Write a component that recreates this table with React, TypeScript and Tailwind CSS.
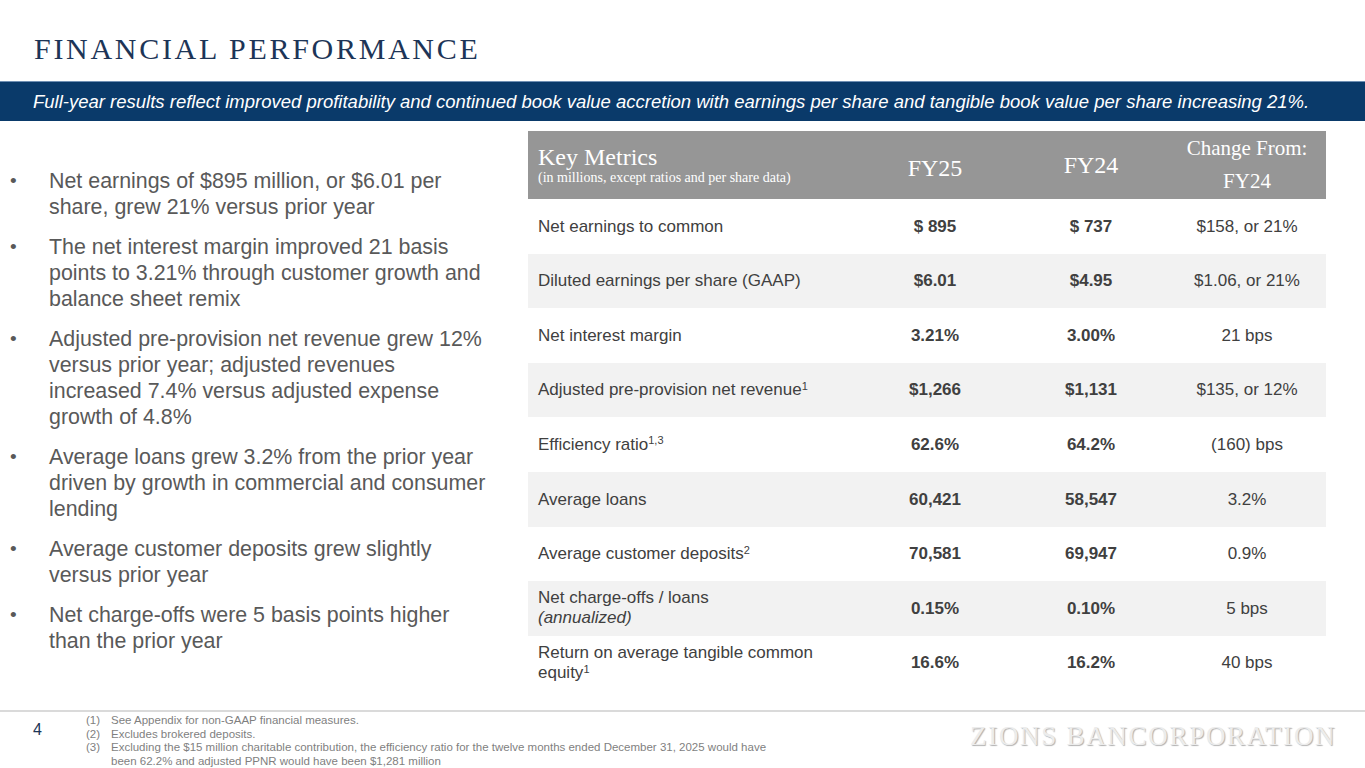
const bullets = [
  "Net earnings of $895 million, or $6.01 per share, grew 21% versus prior year",
  "The net interest margin improved 21 basis points to 3.21% through customer growth and balance sheet remix",
  "Adjusted pre-provision net revenue grew 12% versus prior year; adjusted revenues increased 7.4% versus adjusted expense growth of 4.8%",
  "Average loans grew 3.2% from the prior year driven by growth in commercial and consumer lending",
  "Average customer deposits grew slightly versus prior year",
  "Net charge-offs were 5 basis points higher than the prior year",
];

type Row = {
  label: React.ReactNode;
  fy25: string;
  fy24: string;
  change: string;
};

const rows: Row[] = [
  { label: "Net earnings to common", fy25: "$ 895", fy24: "$ 737", change: "$158, or 21%" },
  { label: "Diluted earnings per share (GAAP)", fy25: "$6.01", fy24: "$4.95", change: "$1.06, or 21%" },
  { label: "Net interest margin", fy25: "3.21%", fy24: "3.00%", change: "21 bps" },
  {
    label: (
      <>
        Adjusted pre-provision net revenue<sup className="text-[11px]">1</sup>
      </>
    ),
    fy25: "$1,266",
    fy24: "$1,131",
    change: "$135, or 12%",
  },
  {
    label: (
      <>
        Efficiency ratio<sup className="text-[11px]">1,3</sup>
      </>
    ),
    fy25: "62.6%",
    fy24: "64.2%",
    change: "(160) bps",
  },
  { label: "Average loans", fy25: "60,421", fy24: "58,547", change: "3.2%" },
  {
    label: (
      <>
        Average customer deposits<sup className="text-[11px]">2</sup>
      </>
    ),
    fy25: "70,581",
    fy24: "69,947",
    change: "0.9%",
  },
  {
    label: (
      <span className="block leading-[20px]">
        Net charge-offs / loans
        <br />
        <i>(annualized)</i>
      </span>
    ),
    fy25: "0.15%",
    fy24: "0.10%",
    change: "5 bps",
  },
  {
    label: (
      <span className="block leading-[20px]">
        Return on average tangible common
        <br />
        equity<sup className="text-[11px]">1</sup>
      </span>
    ),
    fy25: "16.6%",
    fy24: "16.2%",
    change: "40 bps",
  },
];

const notes = [
  ["(1)", "See Appendix for non-GAAP financial measures."],
  ["(2)", "Excludes brokered deposits."],
  [
    "(3)",
    "Excluding the $15 million charitable contribution, the efficiency ratio for the twelve months ended December 31, 2025 would have been 62.2% and adjusted PPNR would have been $1,281 million",
  ],
];

export default function App() {
  return (
    <div className="flex h-[768px] w-[1365px] flex-col overflow-hidden bg-white font-['Liberation_Sans',Arial,sans-serif]">
      {/* Title */}
      <div className="flex h-[81px] items-end pb-[17px] pl-[34px]">
        <h1 className="font-['Liberation_Serif',serif] text-[30px] leading-none tracking-[2.7px] text-[#1d3557]">
          FINANCIAL PERFORMANCE
        </h1>
      </div>

      {/* Banner */}
      <div className="flex h-[40px] items-center border-t border-[#6f8fb3] bg-[#0a3a6a] pl-[33px]">
        <p className="text-[18.5px] italic text-white">
          Full-year results reflect improved profitability and continued book value accretion with earnings per share and tangible book value per share increasing 21%.
        </p>
      </div>

      {/* Main */}
      <div className="flex flex-1">
        {/* Bullets */}
        <div className="w-[528px] pt-[47px]">
          <ul className="space-y-[14px]">
            {bullets.map((b) => (
              <li key={b} className="flex text-[21.4px] leading-[26px] text-[#595959]">
                <span className="w-[49px] shrink-0 pl-[10px] text-[19px]">•</span>
                <span className="w-[440px]">{b}</span>
              </li>
            ))}
          </ul>
        </div>

        {/* Table */}
        <div className="w-[798px] pt-[10px]">
          <div className="flex h-[68px] items-center bg-[#969696] font-['Liberation_Serif',serif] text-white">
            <div className="w-[328px] pl-[10px]">
              <div className="text-[24px] leading-[25px]">Key Metrics</div>
              <div className="text-[14px] leading-[15px]">(in millions, except ratios and per share data)</div>
            </div>
            <div className="w-[158px] pt-[6px] text-center text-[24px]">FY25</div>
            <div className="w-[154px] text-center text-[24px]">FY24</div>
            <div className="w-[158px] text-center text-[21px] leading-[33px]">
              Change From:
              <br />
              FY24
            </div>
          </div>
          {rows.map((r, i) => (
            <div
              key={i}
              className={`flex h-[54.6px] items-center text-[17px] text-[#404040] ${i % 2 === 1 ? "bg-[#f2f2f2]" : "bg-white"}`}
            >
              <div className="w-[328px] pl-[10px]">{r.label}</div>
              <div className="w-[158px] text-center font-bold">{r.fy25}</div>
              <div className="w-[154px] text-center font-bold">{r.fy24}</div>
              <div className="w-[158px] text-center">{r.change}</div>
            </div>
          ))}
        </div>
      </div>

      {/* Footer */}
      <div className="flex h-[58px] border-t-2 border-[#dadada]">
        <div className="w-[86px] pl-[33px] pt-[6px] text-[16px] text-[#1d3557]">4</div>
        <div className="w-[690px] pt-[2px] text-[11.5px] leading-[13.5px] text-[#7f7f7f]">
          {notes.map(([n, t]) => (
            <div key={n} className="flex">
              <span className="w-[25px] shrink-0">{n}</span>
              <span className="w-[662px]">{t}</span>
            </div>
          ))}
        </div>
        <div className="flex-1 pl-[194px] pt-[11px] font-['Liberation_Serif',serif] text-[27px] leading-none tracking-[1.7px] text-[#ececec] [text-shadow:1px_1px_1px_#b0b0b0]">
          ZIONS BANCORPORATION
        </div>
      </div>
    </div>
  );
}
